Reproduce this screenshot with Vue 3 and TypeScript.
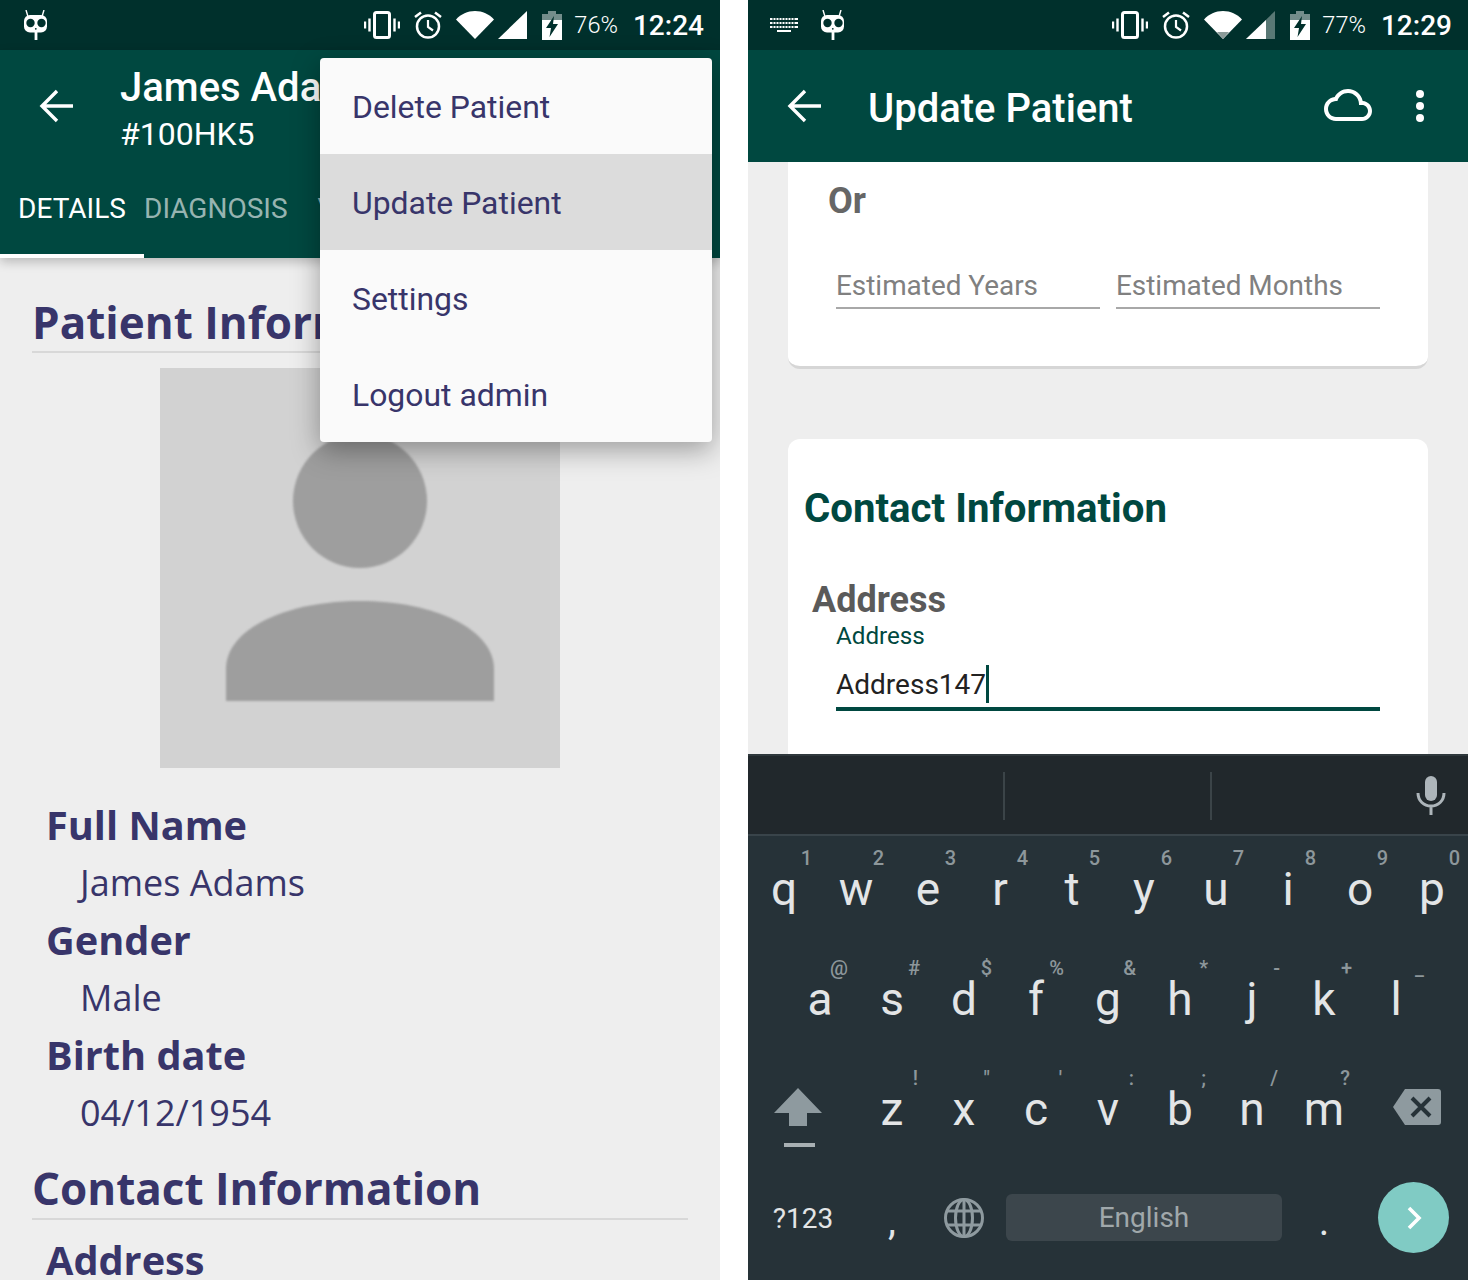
<script setup lang="ts">
interface Key {
  c: string
  hint?: string
}

const rows: Key[][] = [
  [
    { c: 'q', hint: '1' },
    { c: 'w', hint: '2' },
    { c: 'e', hint: '3' },
    { c: 'r', hint: '4' },
    { c: 't', hint: '5' },
    { c: 'y', hint: '6' },
    { c: 'u', hint: '7' },
    { c: 'i', hint: '8' },
    { c: 'o', hint: '9' },
    { c: 'p', hint: '0' },
  ],
  [
    { c: 'a', hint: '@' },
    { c: 's', hint: '#' },
    { c: 'd', hint: '$' },
    { c: 'f', hint: '%' },
    { c: 'g', hint: '&' },
    { c: 'h', hint: '*' },
    { c: 'j', hint: '-' },
    { c: 'k', hint: '+' },
    { c: 'l', hint: '_' },
  ],
  [
    { c: 'z', hint: '!' },
    { c: 'x', hint: '"' },
    { c: 'c', hint: "'" },
    { c: 'v', hint: ':' },
    { c: 'b', hint: ';' },
    { c: 'n', hint: '/' },
    { c: 'm', hint: '?' },
  ],
]

const menu = ['Delete Patient', 'Update Patient', 'Settings', 'Logout admin']

const details = [
  { label: 'Full Name', value: 'James Adams' },
  { label: 'Gender', value: 'Male' },
  { label: 'Birth date', value: '04/12/1954' },
]
</script>

<template>
  <div class="screen">
    <svg class="defs" width="0" height="0">
      <symbol id="mascot" viewBox="0 0 26 30">
        <path d="M4 0l1.800 6M22 0l-1.800 6" stroke="#fff" stroke-width="1.400" fill="none" />
        <rect x="2" y="5" width="23" height="17.500" rx="6" fill="#fff" />
        <circle cx="8.500" cy="13" r="4.200" fill="#00302c" />
        <circle cx="19.500" cy="13" r="4.200" fill="#00302c" />
        <circle cx="13.800" cy="18.800" r=".9" fill="#00302c" />
        <path d="M14 22v8" stroke="#fff" stroke-width="2.800" />
      </symbol>
      <symbol id="vibrate" viewBox="0 0 36 28">
        <rect x="10.500" y="1.500" width="15" height="25" rx="2" fill="none" stroke="#fff" stroke-width="3" />
        <path d="M5.500 7.500v13M30.500 7.500v13M1 10.500v7M35 10.500v7" stroke="#fff" stroke-width="2.400" fill="none" />
      </symbol>
      <symbol id="alarm" viewBox="0 0 28 28">
        <circle cx="14" cy="15.500" r="11" fill="none" stroke="#fff" stroke-width="2.500" />
        <path d="M14 9v7l5 3.500" fill="none" stroke="#fff" stroke-width="2.200" />
        <path d="M1 6l6-4.500M27 6l-6-4.500" stroke="#fff" stroke-width="2.500" fill="none" />
      </symbol>
      <symbol id="back" viewBox="0 0 36 36">
        <path d="M34 18H3M18 3L3 18l15 15" fill="none" stroke="#fff" stroke-width="3.400" />
      </symbol>
      <symbol id="battery" viewBox="0 0 20 29">
        <path d="M6 0h8v3h6v6H0V3h6z" fill="#fff" fill-opacity=".45" />
        <path d="M0 9h20v20H0z" fill="#fff" />
        <path d="M12 5L4 17h5l-1.500 9L16 13h-5z" fill="#00302c" />
      </symbol>
    </svg>

    <!-- left phone: patient details with open menu -->
    <section class="phone">
      <div class="status">
        <svg class="mascot" width="26" height="30"><use href="#mascot" /></svg>
        <div class="status__right">
          <svg class="ic-vibrate" width="36" height="28"><use href="#vibrate" /></svg>
          <svg class="ic-alarm" width="28" height="28"><use href="#alarm" /></svg>
          <svg class="ic-wifi" width="38" height="28" viewBox="0 0 38 28">
            <path d="M0 8.500C5 3 11.500 0 19 0s14 3 19 8.500L19 28z" fill="#fff" />
          </svg>
          <svg class="ic-signal" width="29" height="28" viewBox="0 0 29 28">
            <path d="M29 0v28H0z" fill="#fff" />
          </svg>
          <svg class="ic-battery" width="20" height="29"><use href="#battery" /></svg>
          <span class="status__pct">76%</span>
          <span class="status__time">12:24</span>
        </div>
      </div>

      <header class="appbar appbar--tabs">
        <div class="appbar__row">
          <svg class="appbar__back" width="36" height="36"><use href="#back" /></svg>
          <div class="appbar__titles">
            <div class="appbar__name">James Adams</div>
            <div class="appbar__id">#100HK5</div>
          </div>
        </div>
        <nav class="tabs">
          <span class="tab tab--active">DETAILS</span>
          <span class="tab">DIAGNOSIS</span>
          <span class="tab">VITALS</span>
        </nav>
      </header>

      <main class="details">
        <h2 class="details__heading">Patient Information</h2>
        <div class="avatar">
          <svg width="400" height="400" viewBox="0 0 400 400">
            <circle cx="200" cy="133" r="67" fill="#9e9e9e" />
            <path d="M66 333v-32c0-40 60-68 134-68s134 28 134 68v32z" fill="#9e9e9e" />
          </svg>
        </div>
        <div v-for="d in details" :key="d.label" class="field">
          <div class="field__label">{{ d.label }}</div>
          <div class="field__value">{{ d.value }}</div>
        </div>
        <h2 class="details__heading details__heading--second">Contact Information</h2>
        <div class="field__label field__label--address">Address</div>
      </main>

      <div class="menu">
        <div v-for="(m, i) in menu" :key="m" class="menu__item" :class="{ 'menu__item--active': i === 1 }">{{ m }}</div>
      </div>
    </section>

    <!-- right phone: update form with keyboard -->
    <section class="phone">
      <div class="status">
        <div class="status__left">
          <svg class="ic-kbd" width="28" height="14" viewBox="0 0 28 14">
            <path d="M0 0h28v2H0zM0 4h28v2H0zM0 8h28v2H0zM7 12h14v2H7z" fill="#fff" />
            <path d="M3 0v10M6 0v10M9 0v10M12 0v10M15 0v10M18 0v10M21 0v10M24 0v10" stroke="#00302c" stroke-width="1" />
          </svg>
          <svg class="mascot" width="26" height="30"><use href="#mascot" /></svg>
        </div>
        <div class="status__right">
          <svg class="ic-vibrate" width="36" height="28"><use href="#vibrate" /></svg>
          <svg class="ic-alarm" width="28" height="28"><use href="#alarm" /></svg>
          <svg class="ic-wifi" width="38" height="28" viewBox="0 0 38 28">
            <path d="M0 8.500C5 3 11.500 0 19 0s14 3 19 8.500L19 28z" fill="#fff" />
            <path d="M13 21h12l-6 7z" fill="#8a9a98" />
          </svg>
          <svg class="ic-signal" width="29" height="28" viewBox="0 0 29 28">
            <path d="M29 0v28H0z" fill="#fff" fill-opacity=".35" />
            <path d="M20 9v19H0z" fill="#fff" />
          </svg>
          <svg class="ic-battery" width="20" height="29"><use href="#battery" /></svg>
          <span class="status__pct">77%</span>
          <span class="status__time">12:29</span>
        </div>
      </div>

      <header class="appbar appbar--plain">
        <svg class="appbar__back" width="36" height="36"><use href="#back" /></svg>
        <div class="appbar__title">Update Patient</div>
        <svg class="appbar__cloud" width="48" height="32" viewBox="0 4 24 16">
          <path
            d="M19.350 10.040C18.670 6.590 15.640 4 12 4 9.110 4 6.600 5.640 5.350 8.040 2.340 8.360 0 10.910 0 14c0 3.310 2.690 6 6 6h13c2.760 0 5-2.240 5-5 0-2.640-2.050-4.780-4.650-4.960zM19 18H6c-2.210 0-4-1.790-4-4s1.790-4 4-4h.71C7.370 7.690 9.480 6 12 6c3.040 0 5.500 2.460 5.500 5.500v.5H19c1.660 0 3 1.340 3 3s-1.340 3-3 3z"
            fill="#fff"
          />
        </svg>
        <div class="appbar__dots"><i /><i /><i /></div>
      </header>

      <main class="form">
        <div class="card card--first">
          <div class="or">Or</div>
          <div class="estimates">
            <div class="estimate">Estimated Years</div>
            <div class="estimate">Estimated Months</div>
          </div>
        </div>
        <div class="card card--second">
          <h2 class="card__title">Contact Information</h2>
          <div class="card__label">Address</div>
          <div class="float-label">Address</div>
          <div class="input">Address147<span class="caret" /></div>
        </div>
      </main>

      <div class="kbd">
        <div class="suggest">
          <span class="suggest__sep suggest__sep--a" />
          <span class="suggest__sep suggest__sep--b" />
          <svg class="suggest__mic" width="30" height="40" viewBox="0 0 30 40">
            <rect x="9" y="0" width="12" height="25" rx="6" fill="#adb5ba" />
            <path d="M2 17c0 8 6 13 13 13s13-5 13-13M15 30v9" fill="none" stroke="#adb5ba" stroke-width="3" />
          </svg>
        </div>
        <div class="kbd__row">
          <span v-for="k in rows[0]" :key="k.c" class="key">
            <span class="key__hint">{{ k.hint }}</span>{{ k.c }}
          </span>
        </div>
        <div class="kbd__row kbd__row--mid">
          <span v-for="k in rows[1]" :key="k.c" class="key">
            <span class="key__hint">{{ k.hint }}</span>{{ k.c }}
          </span>
        </div>
        <div class="kbd__row kbd__row--low">
          <span class="key key--shift">
            <svg width="48" height="60" viewBox="0 0 48 60">
              <path d="M24 0l24 25H33v13H15V25H0z" fill="#8e9a9f" />
              <path d="M10 55h31v4H10z" fill="#a8b0b3" />
            </svg>
          </span>
          <span v-for="k in rows[2]" :key="k.c" class="key">
            <span class="key__hint">{{ k.hint }}</span>{{ k.c }}
          </span>
          <span class="key key--del">
            <svg width="48" height="36" viewBox="0 0 48 36">
              <path d="M12 0h33a3 3 0 0 1 3 3v30a3 3 0 0 1-3 3H12L0 18z" fill="#8e9a9f" />
              <path d="M19 9l18 18M37 9L19 27" stroke="#263238" stroke-width="4" />
            </svg>
          </span>
        </div>
        <div class="kbd__row kbd__row--bottom">
          <span class="key key--sym">?123</span>
          <span class="key key--comma">,</span>
          <span class="key key--globe">
            <svg width="40" height="40" viewBox="0 0 40 40" fill="none" stroke="#8e9a9f" stroke-width="3">
              <circle cx="20" cy="20" r="18.500" />
              <ellipse cx="20" cy="20" rx="8.500" ry="18.500" />
              <path d="M20 1.500v37M3 13h34M3 27h34" />
            </svg>
          </span>
          <span class="space">English</span>
          <span class="key key--period">.</span>
          <span class="enter">
            <svg width="16" height="24" viewBox="0 0 16 24"><path d="M3 2l10 10L3 22" fill="none" stroke="#fff" stroke-width="3.600" /></svg>
          </span>
        </div>
      </div>
    </section>
  </div>
</template>

<style>
body {
  background: #fff;
}
</style>

<style scoped>
.screen {
  display: flex;
  gap: 28px;
  width: 1468px;
  height: 1280px;
  overflow: hidden;
  font-family: Roboto, "Liberation Sans", sans-serif;
}

.defs {
  position: absolute;
}

.phone {
  position: relative;
  display: flex;
  flex-direction: column;
  width: 720px;
  height: 1280px;
  overflow: hidden;
  background: #eeeeee;
}

.status {
  display: flex;
  align-items: center;
  justify-content: space-between;
  flex: none;
  height: 50px;
  padding: 0 16px 0 22px;
  box-sizing: border-box;
  background: #00302c;
  color: #fff;
}

.status__left {
  display: flex;
  align-items: center;
  gap: 21px;
}

.mascot {
  display: block;
}

.status__right {
  display: flex;
  align-items: center;
}

.ic-vibrate {
  margin-right: 14px;
}

.ic-alarm {
  margin-right: 14px;
}

.ic-wifi {
  margin-right: 4px;
}

.ic-signal {
  margin-right: 15px;
}

.status__pct {
  margin-left: 12px;
  font-size: 23.6px;
  font-weight: 300;
}

.status__time {
  margin-left: 15px;
  font-size: 28px;
  font-weight: 500;
}

.appbar {
  flex: none;
  background: #004840;
  color: #fff;
  box-shadow: 0 4px 10px rgba(0, 0, 0, 0.22);
  position: relative;
  z-index: 1;
}

.appbar--tabs {
  height: 208px;
  box-sizing: border-box;
}

.appbar__row {
  display: flex;
  align-items: center;
  height: 112px;
  padding-left: 39px;
}

.appbar__back {
  flex: none;
}

.appbar__titles {
  margin-left: 45px;
  margin-top: 7px;
  white-space: nowrap;
}

.appbar__name {
  font-size: 40px;
  font-weight: 500;
  line-height: 48px;
}

.appbar__id {
  font-size: 32px;
  line-height: 44px;
}

.tabs {
  display: flex;
  height: 96px;
}

.tab {
  display: flex;
  align-items: center;
  height: 96px;
  padding: 0 30px 4px 0;
  box-sizing: border-box;
  font-size: 28px;
  color: rgba(255, 255, 255, 0.6);
}

.tab--active {
  justify-content: center;
  width: 144px;
  padding: 0;
  color: #fff;
  border-bottom: 4px solid #fff;
}

.details {
  padding: 0 32px;
}

.details__heading {
  margin: 36px 0 0;
  height: 59px;
  font-family: "Open Sans", "Noto Sans", sans-serif;
  font-size: 44px;
  font-weight: 700;
  line-height: 56px;
  color: #38356a;
  border-bottom: 2px solid #d8d8d8;
  box-sizing: border-box;
  white-space: nowrap;
}

.details__heading--second {
  margin-top: 18px;
  height: 60px;
}

.avatar {
  width: 400px;
  height: 400px;
  margin: 15px 0 0 128px;
  background: #d2d2d2;
}

.avatar svg {
  display: block;
  filter: blur(1px);
}

.field {
  padding-left: 14px;
}

.avatar + .field {
  margin-top: 29px;
}

.field__label {
  font-family: "Open Sans", "Noto Sans", sans-serif;
  font-size: 39.7px;
  font-weight: 700;
  line-height: 56px;
  color: #38356a;
}

.field__label--address {
  margin-top: 12px;
  padding-left: 14px;
}

.field__value {
  margin-top: 1px;
  padding-left: 34px;
  font-family: "Open Sans", "Noto Sans", sans-serif;
  font-size: 36px;
  line-height: 58px;
  color: #38356a;
}

.menu {
  position: absolute;
  top: 58px;
  left: 320px;
  z-index: 2;
  width: 392px;
  overflow: hidden;
  background: #fafafa;
  border-radius: 4px;
  box-shadow: 0 8px 28px rgba(0, 0, 0, 0.35);
}

.menu__item {
  display: flex;
  align-items: center;
  height: 96px;
  padding: 2px 0 0 32px;
  box-sizing: border-box;
  font-size: 31.9px;
  color: #38356a;
}

.menu__item--active {
  background: #dcdcdc;
}

.appbar--plain {
  display: flex;
  align-items: center;
  height: 112px;
  padding-left: 39px;
  padding-right: 44px;
  box-shadow: none;
}

.appbar__title {
  flex: 1;
  margin-left: 45px;
  margin-top: 4px;
  font-size: 40px;
  font-weight: 500;
}

.appbar__cloud {
  margin-right: 44px;
  margin-top: -2px;
}

.appbar__dots {
  display: flex;
  flex-direction: column;
  gap: 4px;
}

.appbar__dots i {
  display: block;
  width: 8px;
  height: 8px;
  border-radius: 50%;
  background: #fff;
}

.form {
  flex: 1;
  min-height: 0;
  overflow: hidden;
  padding: 0 40px;
}

.card {
  background: #fff;
  border-radius: 0 0 12px 12px;
}

.card--first {
  height: 207px;
  padding: 20px 48px 0 40px;
  box-sizing: border-box;
  border-bottom: 3px solid #d6d6d6;
}

.or {
  font-size: 36px;
  font-weight: 700;
  color: #666;
  line-height: 38px;
}

.estimates {
  display: flex;
  gap: 16px;
  margin: 45px 0 0 8px;
}

.estimate {
  flex: 1;
  height: 44px;
  font-size: 27.9px;
  line-height: 42px;
  color: #808080;
  border-bottom: 2px solid #a8a8a8;
  box-sizing: border-box;
}

.card--second {
  margin-top: 70px;
  height: 400px;
  padding: 45px 48px 0 16px;
  box-sizing: border-box;
  border-radius: 12px 12px 0 0;
}

.card__title {
  margin: 0;
  font-size: 40.2px;
  font-weight: 700;
  line-height: 50px;
  color: #004840;
}

.card__label {
  margin: 46px 0 0 8px;
  font-size: 36px;
  font-weight: 700;
  line-height: 40px;
  color: #5a5a5a;
}

.float-label {
  margin: 0 0 0 32px;
  font-size: 24.2px;
  line-height: 32px;
  color: #004840;
}

.input {
  display: flex;
  align-items: center;
  height: 58px;
  margin: 1px 0 0 32px;
  padding-top: 8px;
  box-sizing: border-box;
  font-size: 28px;
  color: #222;
  border-bottom: 4px solid #004840;
}

.caret {
  width: 3px;
  height: 38px;
  background: #004840;
}

.kbd {
  position: relative;
  z-index: 1;
  flex: none;
  height: 526px;
  background: #263238;
  color: #e3e5e6;
}

.suggest {
  position: relative;
  height: 82px;
  background: #21282c;
  border-bottom: 2px solid #39444a;
  box-sizing: border-box;
  border-top: 2px solid #2f383c;
}

.suggest__sep {
  position: absolute;
  top: 16px;
  width: 2px;
  height: 48px;
  background: #3b4448;
}

.suggest__sep--a {
  left: 255px;
}

.suggest__sep--b {
  left: 462px;
}

.suggest__mic {
  position: absolute;
  top: 20px;
  right: 22px;
}

.kbd__row {
  display: flex;
  height: 110px;
}

.kbd__row--mid {
  padding-left: 36px;
}

.kbd__row--bottom {
  align-items: center;
  height: 103px;
}

.key {
  position: relative;
  display: flex;
  align-items: flex-start;
  justify-content: center;
  flex: none;
  width: 72px;
  padding-top: 24px;
  box-sizing: border-box;
  font-size: 46px;
  line-height: 58px;
}

.key__hint {
  position: absolute;
  top: 12px;
  right: 8px;
  font-size: 20px;
  font-weight: 500;
  line-height: 20px;
  color: #8d979b;
}

.kbd__row--low .key__hint {
  right: 10px;
}

.key--shift {
  width: 108px;
  padding: 32px 8px 0 0;
}

.key--del {
  width: 108px;
  padding: 33px 0 0 6px;
}

.key--sym {
  width: 108px;
  padding: 3px 0 0 2px;
  font-size: 28px;
  line-height: 36px;
}

.key--comma {
  width: 72px;
  padding: 7px 0 0;
  font-size: 40px;
}

.key--globe {
  width: 72px;
  padding: 0;
  margin-right: 6px;
}

.key--period {
  width: 84px;
  padding: 9px 0 0;
  font-size: 40px;
}

.space {
  display: flex;
  align-items: center;
  justify-content: center;
  width: 276px;
  height: 47px;
  background: #3c464c;
  border-radius: 6px;
  font-size: 28px;
  color: #a0a8ab;
}

.enter {
  display: flex;
  align-items: center;
  justify-content: center;
  width: 71px;
  height: 71px;
  margin-left: 12px;
  border-radius: 50%;
  background: #80cbc4;
}
</style>
